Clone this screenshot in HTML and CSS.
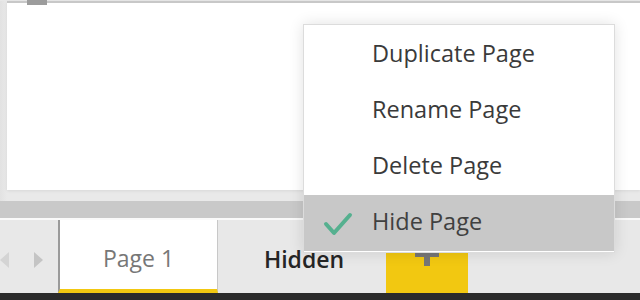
FILE: index.html
```html
<!DOCTYPE html>
<html lang="en">
<head>
    <meta charset="UTF-8">
    <title>Page tabs</title>
    <link rel="stylesheet" href="styles.css">
</head>
<body>

    <div class="workspace">
        <div class="canvas">
            <div class="ruler"><span class="ruler-handle"></span></div>
        </div>
    </div>

    <div class="scrollbar"></div>

    <div class="tabs">
        <div class="tab-nav">
            <svg class="nav-arrow" width="10" height="16" viewBox="0 0 10 16"><path d="M9 0 L0 8 L9 16 Z" fill="#d4d4d4"/></svg>
            <svg class="nav-arrow" width="10" height="16" viewBox="0 0 10 16"><path d="M1 0 L10 8 L1 16 Z" fill="#c4c4c4"/></svg>
        </div>
        <div class="tab active">Page 1</div>
        <div class="tab hidden-tab">Hidden</div>
        <div class="add-btn">
            <svg width="24" height="24" viewBox="0 0 24 24"><path d="M9 0 H15 V9 H24 V15 H15 V24 H9 V15 H0 V9 H9 Z" fill="#777"/></svg>
        </div>
    </div>

    <div class="statusbar"></div>

    <!-- Context menu over the tab -->
    <div class="menu">
        <div class="menu-item"><span class="menu-icon"></span>Duplicate Page</div>
        <div class="menu-item"><span class="menu-icon"></span>Rename Page</div>
        <div class="menu-item"><span class="menu-icon"></span>Delete Page</div>
        <div class="menu-item selected">
            <span class="menu-icon">
                <svg width="30" height="24" viewBox="0 0 30 24"><path d="M3 12 L11 21 L27 3" fill="none" stroke="#55b08f" stroke-width="4" stroke-linecap="round" stroke-linejoin="round"/></svg>
            </span>Hide Page
        </div>
    </div>

</body>
</html>
```

FILE: styles.css
```css
body {
    font-family: "Open Sans", "Noto Sans", sans-serif;
    margin: 0;
    padding: 0;
    width: 640px;
    height: 300px;
    overflow: hidden;
    background: #e8e8e8;
    position: relative;
}

.workspace {
    height: 200px;
    padding-left: 7px;
    background: linear-gradient(to right, #e2e2e2, #e9e9e9 7px);
    box-sizing: border-box;
}

.canvas {
    height: 189px;
    background: #fff;
    box-shadow: 0 1px 3px rgba(0, 0, 0, 0.08);
}

.ruler {
    height: 2px;
    margin-top: 1px;
    background: #c8c8c8;
    display: flex;
}

.ruler-handle {
    width: 20px;
    height: 5px;
    margin-left: 20px;
    margin-top: -1px;
    background: #9c9c9c;
}

.scrollbar {
    height: 17px;
    background: #c9c9c9;
    border-bottom: 2px solid #fafafa;
}

.tabs {
    height: 73px;
    display: flex;
    background: #e8e8e8;
}

.tab-nav {
    width: 58px;
    display: flex;
    align-items: center;
    gap: 23px;
    padding-top: 6px;
    box-sizing: border-box;
}

.tab {
    display: flex;
    align-items: center;
    justify-content: center;
    font-size: 23px;
    box-sizing: border-box;
}

.tab.active {
    width: 160px;
    background: #fff;
    color: #777;
    border-left: 2px solid #9a9a9a;
    border-right: 1px solid #c8c8c8;
    border-bottom: 4px solid #f2c811;
    padding-top: 6px;
}

.hidden-tab {
    width: 168px;
    color: #252525;
    font-weight: 600;
    padding-left: 4px;
    padding-top: 4px;
}

.add-btn {
    width: 82px;
    height: 40px;
    margin-top: 33px;
    background: #f2c811;
    display: flex;
    justify-content: center;
    align-items: flex-start;
}

.add-btn svg {
    margin-top: -11px;
}

.statusbar {
    height: 8px;
    background: #2b2b2b;
}

.menu {
    position: absolute;
    left: 303px;
    top: 24px;
    width: 310px;
    padding: 2px 0 1px;
    background: #fff;
    border: 1px solid #dcdcdc;
    box-shadow: 0 0 14px rgba(0, 0, 0, 0.12);
}

.menu-item {
    height: 56px;
    display: flex;
    align-items: center;
    font-size: 23.5px;
    color: #3a3a3a;
    padding-bottom: 4px;
    box-sizing: border-box;
}

.menu-icon {
    width: 68px;
    display: flex;
    justify-content: center;
    padding-top: 6px;
}

.menu-item.selected {
    background: #c8c8c8;
    color: #404040;
}
```
